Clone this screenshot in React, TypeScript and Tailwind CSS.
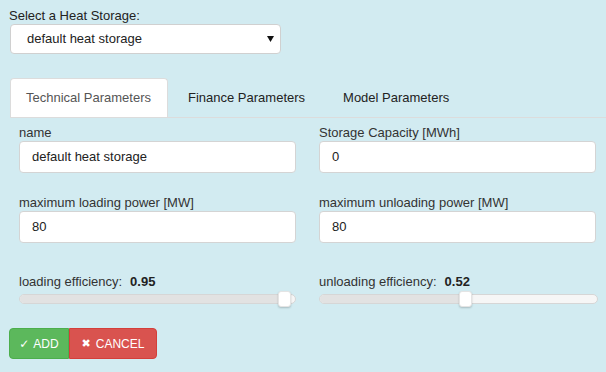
import React from "react";

const FONT = "font-['Liberation_Sans','DejaVu_Sans',Arial,sans-serif]";

const Field = ({ label, value, className = "" }: { label: string; value: string; className?: string }) => (
  <div className={className}>
    <div className="leading-[15px]">{label}</div>
    <div className="mt-[1px] flex h-[32px] items-center rounded-[4px] border border-[#d4d4d4] bg-white pl-[12px] text-[#222]">
      {value}
    </div>
  </div>
);

const Slider = ({ label, value, thumb }: { label: string; value: string; thumb: string }) => (
  <div>
    <div className="leading-[15px]">
      {label}
      <span className="ml-[8px] font-bold text-[#222]">{value}</span>
    </div>
    <div className="relative mt-[5px] h-[10px] w-full rounded-full border border-[#d6d6d6] bg-[#f6f6f6]">
      {/* filled part of the track */}
      <div className={`h-full rounded-l-full bg-[#e2e2e2] ${thumb === "left" ? "w-[262px]" : "w-[143px]"}`} />
      <div
        className={`absolute top-[-4px] h-[16px] w-[13px] rounded-[3px] border border-[#e4e4e4] bg-white shadow-[0_1px_2px_rgba(0,0,0,0.2)] ${
          thumb === "left" ? "left-[258px]" : "left-[139px]"
        }`}
      />
    </div>
  </div>
);

const App = () => {
  return (
    <div className={`min-h-[372px] w-[606px] overflow-hidden bg-[#d2ebf1] text-[13px] text-[#333] ${FONT}`}>
      {/* Select */}
      <div className="pl-[9px] pt-[8px] leading-[15px] text-[#222]">Select a Heat Storage:</div>
      <div className="ml-[10px] mt-[1px] flex h-[30px] w-[271px] items-center justify-between rounded-[4px] border border-[#d0d0d0] bg-white pl-[16px] pr-[6px] text-[#222]">
        <span>default heat storage</span>
        <svg width="7" height="6" viewBox="0 0 7 6">
          <polygon points="0,0 7,0 3.5,6" fill="#111" />
        </svg>
      </div>

      {/* Tabs */}
      <div className="ml-[10px] mt-[24px] flex h-[40px] items-stretch border-b border-[#dcdcdc]">
        <div className="flex items-center rounded-t-[4px] border-x border-t border-[#dcdcdc] bg-white pl-[15px] pr-[16px] text-[#555]">
          Technical Parameters
        </div>
        <div className="ml-[5px] flex items-center px-[15px] text-[#222]">Finance Parameters</div>
        <div className="ml-[8px] flex items-center px-[15px] text-[#222]">Model Parameters</div>
      </div>

      {/* Tab content */}
      <div className="ml-[19px] mt-[7px] grid w-[579px] grid-cols-[277px_279px] gap-x-[23px]">
        <Field label="name" value="default heat storage" />
        <Field label="Storage Capacity [MWh]" value="0" className="w-[277px]" />
        <Field label="maximum loading power [MW]" value="80" className="mt-[22px]" />
        <Field label="maximum unloading power [MW]" value="80" className="mt-[22px] w-[277px]" />
        <div className="mt-[31px]">
          <Slider label="loading efficiency:" value="0.95" thumb="left" />
        </div>
        <div className="mt-[31px]">
          <Slider label="unloading efficiency:" value="0.52" thumb="right" />
        </div>
      </div>

      {/* Buttons */}
      <div className="ml-[9px] mt-[24px] flex h-[31px] text-[12px] text-white">
        <button className="flex w-[60px] items-center justify-center gap-[4px] rounded-l-[4px] border border-[#4cae4c] bg-[#5cb85c]">
          <span>✓</span>
          <span>ADD</span>
        </button>
        <button className="flex w-[88px] items-center justify-center gap-[5px] rounded-r-[4px] border border-[#d43f3a] bg-[#d9534f]">
          <span className="text-[11px]">✖</span>
          <span>CANCEL</span>
        </button>
      </div>
    </div>
  );
};

export default App;
